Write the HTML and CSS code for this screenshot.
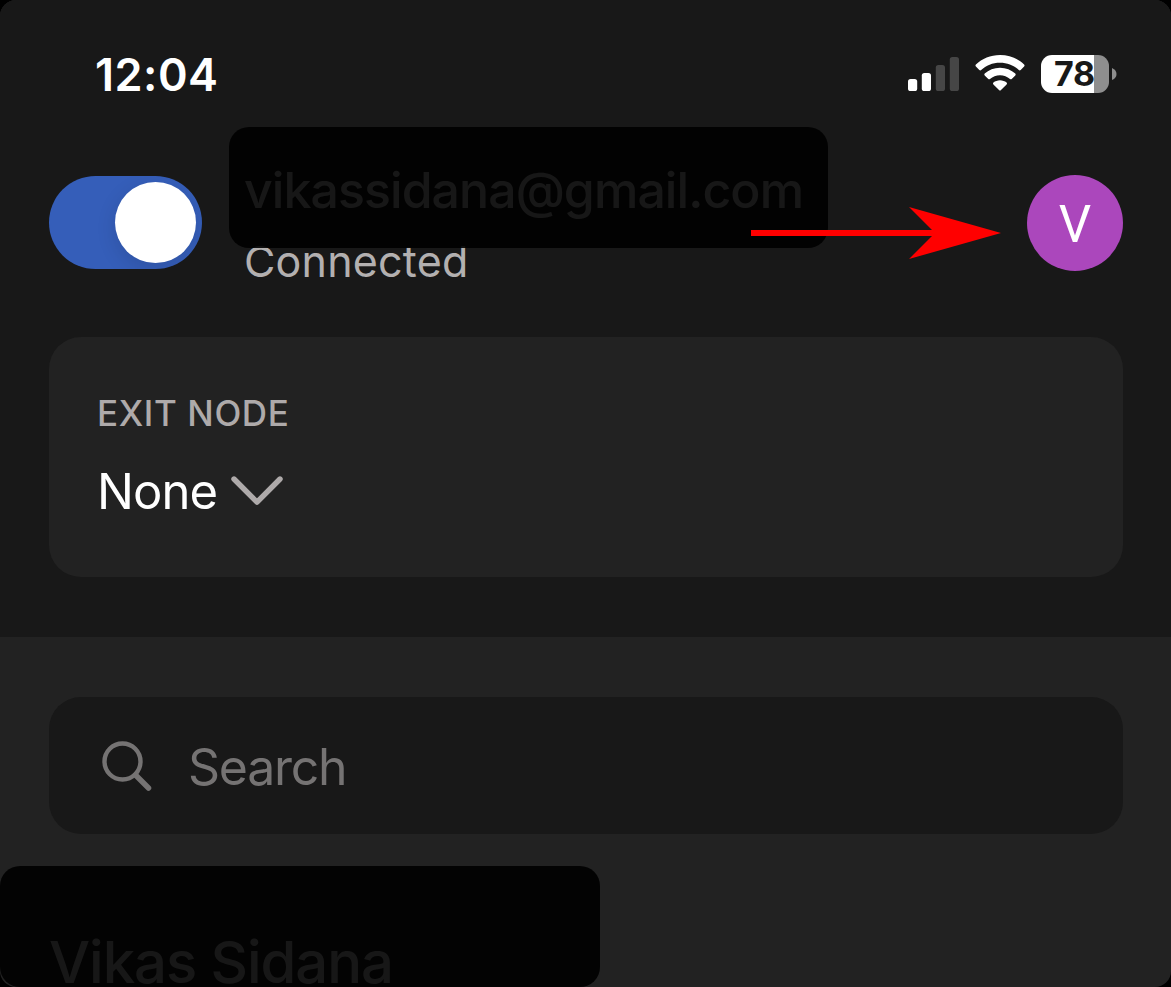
FILE: index.html
```html
<!DOCTYPE html>
<html lang="en">
<head>
<meta charset="utf-8">
<title>Exit node</title>
<link rel="stylesheet" href="styles.css">
</head>
<body>
<main class="screen">
  <section class="top">
    <div class="status">
      <span class="time">12:04</span>
      <div class="indicators">
        <svg class="signal" viewBox="0 0 52 36" width="52" height="36">
          <rect x="0" y="23" width="9.2" height="12" rx="2.6" fill="#fff"/>
          <rect x="13.800" y="17" width="9.2" height="18" rx="2.6" fill="#fff"/>
          <rect x="27.800" y="9" width="9.2" height="26" rx="2.6" fill="#464646"/>
          <rect x="41.800" y="1" width="9.2" height="34" rx="2.6" fill="#464646"/>
        </svg>
        <svg class="wifi" viewBox="0 0 50 38" width="50" height="38">
          <path d="M25 0C15.500 0 7 3.600.900 9.500Q0 10.500.900 11.500L4.300 15Q5.300 15.800 6.200 15C11 10.400 17.500 7.700 25 7.700S39 10.400 43.800 15Q44.700 15.800 45.700 15L49.100 11.500Q50 10.500 49.100 9.500C43 3.600 34.500 0 25 0Z" fill="#fff"/>
          <path d="M25 12.800C19 12.800 13.700 15 9.700 18.600Q8.800 19.500 9.700 20.400L13.300 23.900Q14.100 24.700 15 23.900C17.700 21.600 21.200 20.200 25 20.200S32.300 21.600 35 23.900Q35.900 24.700 36.700 23.900L40.300 20.400Q41.200 19.500 40.300 18.600C36.300 15 31 12.800 25 12.800Z" fill="#fff"/>
          <path d="M25 25.300C22.500 25.300 20.200 26.200 18.400 27.600Q17.500 28.500 18.400 29.400L24 35Q25 36 26 35L31.600 29.400Q32.500 28.500 31.600 27.600C29.800 26.200 27.500 25.300 25 25.300Z" fill="#fff"/>
        </svg>
        <div class="battery"><span class="level">78</span></div>
        <svg class="cap" viewBox="0 0 5 12" width="5" height="12"><path d="M0 0Q4.500 2 4.500 6T0 12Z" fill="#8e8e8e"/></svg>
      </div>
    </div>
    <div class="account">
      <div class="toggle"><div class="knob"></div></div>
      <div class="identity">
        <span class="email">vikassidana@gmail.com</span>
        <span class="state">Connected</span>
      </div>
      <div class="avatar">V</div>
    </div>
    <div class="card">
      <span class="label">EXIT NODE</span>
      <div class="value">
        <span class="none">None</span>
        <svg class="chevron" viewBox="0 0 52 30" width="52" height="30"><path d="M3 3L26 26.200L49 3" fill="none" stroke="#aeaaaa" stroke-width="5.400" stroke-linecap="round" stroke-linejoin="round"/></svg>
      </div>
    </div>
  </section>
  <section class="list">
    <div class="search">
      <svg viewBox="0 0 52 52" width="52" height="52"><g fill="none" stroke="#757373"><circle cx="21.500" cy="21.500" r="18" stroke-width="4.400"/><path d="M34.500 35L47.500 48" stroke-width="5.500" stroke-linecap="round"/></g></svg>
      <span class="placeholder">Search</span>
    </div>
    <h2 class="name">Vikas Sidana</h2>
  </section>
  <div class="mask mask-email"></div>
  <div class="mask mask-name"></div>
  <svg class="arrow" viewBox="0 0 252 54" width="252" height="54"><path d="M1 24H182L159 1L251 27L159 53L182 30H1Z" fill="#f00"/></svg>
</main>
</body>
</html>
```
FILE: styles.css
```css
* { box-sizing: border-box; }
body {
  margin: 0;
  background: #000;
  font-family: Inter, "Liberation Sans", sans-serif;
}
svg { display: block; flex: none; }
.screen {
  position: relative;
  width: 1171px;
  height: 987px;
  overflow: hidden;
  border-radius: 16px;
  background: #222;
  color: #fff;
  white-space: nowrap;
}
.top {
  height: 637px;
  padding: 44px 48px 0 49px;
  background: #181818;
}
.status {
  display: flex;
  justify-content: space-between;
  align-items: center;
  height: 60px;
  padding: 0 6px 0 46px;
}
.time { padding-top: 2px; font-size: 45px; font-weight: 600; line-height: 60px; letter-spacing: .5px; }
.indicators { display: flex; align-items: center; }
.wifi { margin: 0 16px 0 15.500px; }
.battery {
  width: 68px;
  height: 38px;
  border-radius: 11px;
  background: linear-gradient(to right, #fff 53px, #8e8e8e 53px);
}
.level {
  display: block;
  padding-left: 13px;
  font-size: 34px;
  font-weight: 700;
  line-height: 38px;
  letter-spacing: -.2px;
  color: #181818;
}
.cap { margin-left: 3px; }
.account {
  display: flex;
  align-items: flex-start;
  height: 177px;
  margin-top: 56px;
}
.toggle {
  flex: none;
  width: 153.500px;
  height: 93px;
  margin: 16px 0 0 -.500px;
  padding: 6px 6px 6px 66px;
  border-radius: 47px;
  background: #355eb9;
  overflow: hidden;
}
.knob {
  width: 81px;
  height: 81px;
  border-radius: 50%;
  background: #fff;
  box-shadow: 0 6px 20px rgba(0, 0, 0, .12);
}
.identity {
  display: flex;
  flex: 1;
  flex-direction: column;
  gap: 11px;
  padding-left: 43px;
}
.email { margin-left: -1px; font-size: 50px; font-weight: 500; line-height: 60px; letter-spacing: -.93px; }
.state { margin-left: -1px; font-size: 43px; line-height: 60px; letter-spacing: .2px; color: #b3b0b0; }
.avatar {
  width: 96px;
  height: 96px;
  margin-top: 15px;
  padding-top: 1.500px;
  border-radius: 50%;
  background: #ab47bc;
  font: 400 51px/96px Roboto, sans-serif;
  text-align: center;
}
.card {
  display: flex;
  flex-direction: column;
  gap: 28px;
  height: 240px;
  padding: 56px 48px;
  border-radius: 32px;
  background: #222;
}
.label { font-size: 35px; font-weight: 500; line-height: 40px; letter-spacing: .6px; color: #aeaaaa; }
.value { display: flex; align-items: center; height: 60px; }
.none { padding-top: 1px; font-size: 49px; line-height: 60px; letter-spacing: -.9px; }
.chevron { margin-left: 14px; }
.list { padding: 60px 48px 0 49px; }
.search {
  display: flex;
  align-items: center;
  height: 137px;
  padding-left: 52px;
  border-radius: 32px;
  background: #181818;
}
.placeholder { padding: 2px 0 0 35px; font-size: 50px; line-height: 60px; letter-spacing: -1.250px; color: #757373; }
.name { margin: 93px 0 0; padding-top: 11px; font-size: 58px; font-weight: 500; line-height: 48px; letter-spacing: -1.050px; }
.mask { position: absolute; background: rgba(0, 0, 0, .91); }
.mask-email { left: 229px; top: 127px; width: 599px; height: 121px; border-radius: 20px; }
.mask-name { left: 0; top: 866px; width: 600px; height: 121px; border-radius: 20px; }
.arrow { position: absolute; left: 750px; top: 206px; }
```
